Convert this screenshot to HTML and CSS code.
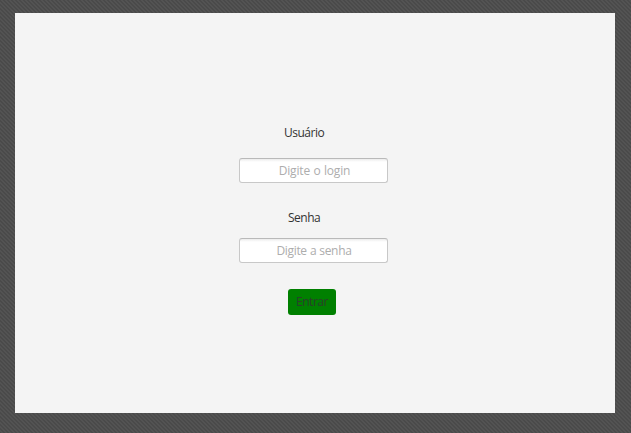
FILE: index.html
```
<!DOCTYPE html>
<html lang="pt-BR">
<head>
<meta charset="utf-8">
<title>Login</title>
<link rel="stylesheet" href="styles.css">
</head>
<body>
<main class="panel">
<form class="login">
<label class="label label-user" for="user">Usuário</label>
<input class="field field-user" id="user" type="text" placeholder="Digite o login">
<label class="label label-password" for="password">Senha</label>
<input class="field field-password" id="password" type="password" placeholder="Digite a senha">
<button class="submit" type="button">Entrar</button>
</form>
</main>
</body>
</html>
```
FILE: styles.css
```
* {
  box-sizing: border-box;
}

body {
  margin: 0;
  height: 433px;
  padding: 13px 16px 20px 15px;
  overflow: hidden;
  background: repeating-linear-gradient(45deg, #4a4a4a 0 1.414px, #535353 1.414px 2.828px);
  font-family: "Open Sans", "Noto Sans", sans-serif;
  font-size: 12px;
}

.panel {
  height: 400px;
  padding: 112px 0 0 224px;
  background: #f4f4f4;
}

.login {
  display: flex;
  flex-direction: column;
  width: 149px;
}

.label {
  height: 16px;
  line-height: 16px;
  color: #333;
  letter-spacing: -0.5px;
}

.label-user {
  margin-left: 45px;
}

.label-password {
  margin: 27px 0 0 49px;
}

.field {
  width: 149px;
  height: 25px;
  padding: 0;
  border: 1px solid #c8c8c8;
  border-top-color: #b9b9b9;
  border-radius: 3px;
  background: linear-gradient(#ececec, #fff 3px);
  font: inherit;
  text-align: center;
  outline: none;
}

.field::placeholder {
  color: #adadad;
  opacity: 1;
}

.field-user {
  margin-top: 17px;
  padding-left: 2px;
  letter-spacing: -0.15px;
  word-spacing: 0.4px;
}

.field-password {
  margin-top: 12px;
  padding-left: 1px;
  letter-spacing: -0.35px;
  word-spacing: 0.4px;
}

.submit {
  width: 48px;
  height: 26px;
  margin: 26px 0 0 49px;
  padding: 0 0 1px;
  border: 0;
  border-radius: 3px;
  background: #008000;
  color: #2a3f2a;
  font: inherit;
  letter-spacing: -0.45px;
}
```
